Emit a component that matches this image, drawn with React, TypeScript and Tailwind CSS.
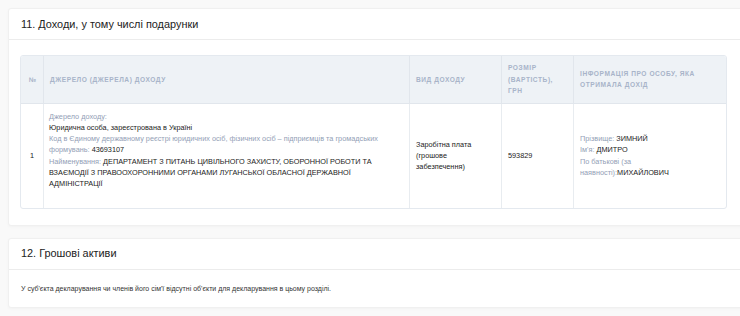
import React from 'react';

interface Recipient {
  lastName: string;
  firstName: string;
  middleName: string;
}

interface IncomeRow {
  n: number;
  sourceType: string;
  code: string;
  name: string;
  kind: string;
  amount: string;
  recipient: Recipient;
}

const rows: IncomeRow[] = [
  {
    n: 1,
    sourceType: 'Юридична особа, зареєстрована в Україні',
    code: '43693107',
    name: 'ДЕПАРТАМЕНТ З ПИТАНЬ ЦИВІЛЬНОГО ЗАХИСТУ, ОБОРОННОЇ РОБОТИ ТА ВЗАЄМОДІЇ З ПРАВООХОРОННИМИ ОРГАНАМИ ЛУГАНСЬКОЇ ОБЛАСНОЇ ДЕРЖАВНОЇ АДМІНІСТРАЦІЇ',
    kind: 'Заробітна плата (грошове забезпечення)',
    amount: '593829',
    recipient: { lastName: 'ЗИМНИЙ', firstName: 'ДМИТРО', middleName: 'МИХАЙЛОВИЧ' },
  },
];

const label = 'text-[#93a0b6]';

function Card({ title, children }: { title: string; children: React.ReactNode }) {
  return (
    <div className="ml-2 w-[736px] rounded-[3px] border border-[#f0f0f0] bg-white shadow-[0_1px_3px_rgba(0,0,0,0.03)]">
      <div className="flex h-[31px] items-center border-b border-[#ececec] px-[12px]">
        <h2 className="text-[10.9px] text-[#222]">{title}</h2>
      </div>
      {children}
    </div>
  );
}

export default function App() {
  return (
    <div
      className="h-[316px] w-[740px] overflow-hidden bg-[#f9f9f9] pt-2"
      style={{ fontFamily: '"Liberation Sans", Arial, sans-serif' }}
    >
      <Card title="11. Доходи, у тому числі подарунки">
        <div className="px-[11px] pt-[15px] pb-[16px]">
          <table className="w-[707px] table-fixed border-separate border-spacing-0 overflow-hidden rounded-[3px] border border-[#e4e9ef] text-[7.3px] leading-[11.3px]">
            <colgroup>
              <col className="w-[23px]" />
              <col className="w-[366px]" />
              <col className="w-[92px]" />
              <col className="w-[72px]" />
              <col />
            </colgroup>
            <thead>
              <tr className="h-[47px] bg-[#eef2f6] text-left align-middle text-[6.6px] font-bold uppercase leading-[11.5px] tracking-[0.55px] text-[#a8b4c9]">
                <th className="border-r border-b border-[#e1e6ec] pl-[8px] font-bold">№</th>
                <th className="border-r border-b border-[#e1e6ec] px-[6px] font-bold">Джерело (джерела) доходу</th>
                <th className="border-r border-b border-[#e1e6ec] px-[6px] font-bold">Вид доходу</th>
                <th className="border-r border-b border-[#e1e6ec] px-[6px] py-[6px] font-bold">Розмір (вартість), грн</th>
                <th className="border-b border-[#e1e6ec] px-[6px] font-bold">Інформація про особу, яка отримала дохід</th>
              </tr>
            </thead>
            <tbody>
              {rows.map(r => (
                <tr key={r.n} className="align-middle text-[#222]">
                  <td className="border-r border-[#e8ecf0] pl-[9px]">{r.n}</td>
                  <td className="border-r border-[#e8ecf0] px-[5px] pt-[7px] pb-[18px]">
                    <div className={label}>Джерело доходу:</div>
                    <div>{r.sourceType}</div>
                    <div>
                      <span className={label}>
                        Код в Єдиному державному реєстрі юридичних осіб, фізичних осіб – підприємців та громадських формувань:
                      </span>{' '}
                      {r.code}
                    </div>
                    <div>
                      <span className={label}>Найменування:</span> {r.name}
                    </div>
                  </td>
                  <td className="border-r border-[#e8ecf0] px-[6px]">{r.kind}</td>
                  <td className="border-r border-[#e8ecf0] px-[6px]">{r.amount}</td>
                  <td className="px-[6px]">
                    <div>
                      <span className={label}>Прізвище:</span> {r.recipient.lastName}
                    </div>
                    <div>
                      <span className={label}>Ім'я:</span> {r.recipient.firstName}
                    </div>
                    <div>
                      <span className={label}>По батькові (за наявності):</span>
                      {r.recipient.middleName}
                    </div>
                  </td>
                </tr>
              ))}
            </tbody>
          </table>
        </div>
      </Card>

      <div className="mt-[12px]">
        <Card title="12. Грошові активи">
          <p className="px-[12px] pt-[14px] pb-[13px] text-[7px] leading-[10px] text-[#333]">
            У суб'єкта декларування чи членів його сім'ї відсутні об'єкти для декларування в цьому розділі.
          </p>
        </Card>
      </div>
    </div>
  );
}
